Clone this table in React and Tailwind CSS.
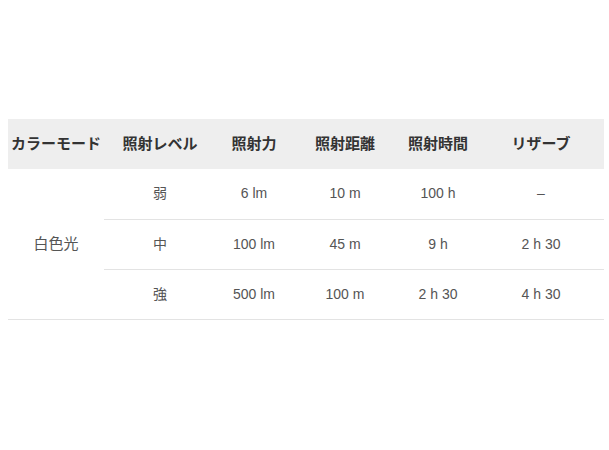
import React from 'react';

const headers = ['カラーモード', '照射レベル', '照射力', '照射距離', '照射時間', 'リザーブ'];
const widths = ['w-[96px]', 'w-[112px]', 'w-[76px]', 'w-[106px]', 'w-[80px]', 'w-[126px]'];

const rows = [
  ['弱', '6 lm', '10 m', '100 h', '–'],
  ['中', '100 lm', '45 m', '9 h', '2 h 30'],
  ['強', '500 lm', '100 m', '2 h 30', '4 h 30'],
];

export default function App() {
  return (
    <div
      className="w-[609px] h-[450px] bg-white pt-[119px] pl-[8px]"
      style={{ fontFamily: '"Liberation Sans", "Noto Sans CJK JP", sans-serif' }}
    >
      <table className="border-collapse table-fixed w-[596px] text-[14px]">
        <colgroup>
          {widths.map((w, i) => (
            <col key={i} className={w} />
          ))}
        </colgroup>
        <thead>
          <tr className="bg-[#eeeeee] h-[50px]">
            {headers.map((h) => (
              <th key={h} className="font-bold text-[15px] text-[#333] text-center p-0 whitespace-nowrap">
                {h}
              </th>
            ))}
          </tr>
        </thead>
        <tbody>
          {rows.map((row, i) => (
            <tr key={i} className="h-[50px]">
              {i === 0 && (
                <td rowSpan={3} className="text-center text-[#555] text-[15px] p-0 border-b border-[#e3e3e3]">
                  白色光
                </td>
              )}
              {row.map((cell, j) => (
                <td key={j} className="text-center text-[#555] p-0 border-b border-[#e3e3e3]">
                  {cell}
                </td>
              ))}
            </tr>
          ))}
        </tbody>
      </table>
    </div>
  );
}
